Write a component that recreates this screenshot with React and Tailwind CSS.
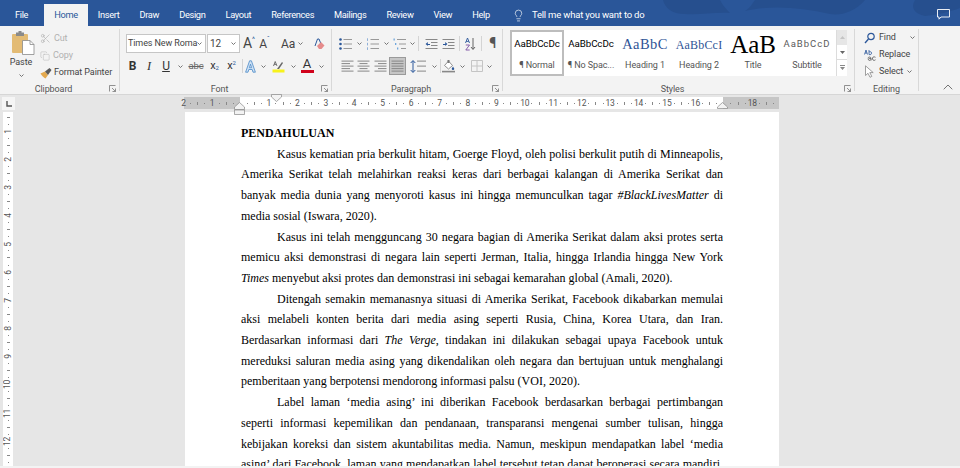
import React from 'react';
import { ChevronUp, Lightbulb, Scissors, Copy } from 'lucide-react';

const tabs = ['File', 'Home', 'Insert', 'Draw', 'Design', 'Layout', 'References', 'Mailings', 'Review', 'View', 'Help'];

const paragraphs = [
    [
        <>Kasus kematian pria berkulit hitam, Goerge Floyd, oleh polisi berkulit putih di Minneapolis,</>,
        <>Amerika Serikat telah melahirkan reaksi keras dari berbagai kalangan di Amerika Serikat dan</>,
        <>banyak media dunia yang menyoroti kasus ini hingga memunculkan tagar <i>#BlackLivesMatter</i> di</>,
        <>media sosial (Iswara, 2020).</>,
    ],
    [
        <>Kasus ini telah mengguncang 30 negara bagian di Amerika Serikat dalam aksi protes serta</>,
        <>memicu aksi demonstrasi di negara lain seperti Jerman, Italia, hingga Irlandia hingga New York</>,
        <><i>Times</i> menyebut aksi protes dan demonstrasi ini sebagai kemarahan global (Amali, 2020).</>,
    ],
    [
        <>Ditengah semakin memanasnya situasi di Amerika Serikat, Facebook dikabarkan memulai</>,
        <>aksi melabeli konten berita dari media asing seperti Rusia, China, Korea Utara, dan Iran.</>,
        <>Berdasarkan informasi dari <i>The Verge</i>, tindakan ini dilakukan sebagai upaya Facebook untuk</>,
        <>mereduksi saluran media asing yang dikendalikan oleh negara dan bertujuan untuk menghalangi</>,
        <>pemberitaan yang berpotensi mendorong informasi palsu (VOI, 2020).</>,
    ],
    [
        <>Label laman ‘media asing’ ini diberikan Facebook berdasarkan berbagai pertimbangan</>,
        <>seperti informasi kepemilikan dan pendanaan, transparansi mengenai sumber tulisan, hingga</>,
        <>kebijakan koreksi dan sistem akuntabilitas media. Namun, meskipun mendapatkan label ‘media</>,
        <>asing’ dari Facebook, laman yang mendapatkan label tersebut tetap dapat beroperasi secara mandiri.</>,
    ],
];

const styleTiles = [
    { sample: 'AaBbCcDc', label: '¶ Normal', cls: 'text-[9.75px] text-black', selected: true },
    { sample: 'AaBbCcDc', label: '¶ No Spac...', cls: 'text-[9.75px] text-black' },
    { sample: 'AaBbC', label: 'Heading 1', cls: "text-[14.5px] text-[#2f5496] font-['Liberation_Serif',serif] tracking-[0.4px]" },
    { sample: 'AaBbCcI', label: 'Heading 2', cls: "text-[12px] text-[#2f5496] font-['Liberation_Serif',serif] tracking-[0.2px]" },
    { sample: 'AaB', label: 'Title', cls: "text-[25px] text-black font-['Liberation_Serif',serif]" },
    { sample: 'AaBbCcD', label: 'Subtitle', cls: 'text-[9.5px] text-[#5a5a5a] tracking-[1px]' },
];

const Chev = ({ className = '' }) => (
    <svg className={`shrink-0 ${className}`} width="5" height="3" viewBox="0 0 5 3">
        <path d="M0.5 0.5 L2.5 2.5 L4.5 0.5" fill="none" stroke="#666" strokeWidth="0.9" />
    </svg>
);

const Launcher = () => (
    <svg className="absolute right-[3px] bottom-[-1px]" width="7" height="7" viewBox="0 0 7 7">
        <path d="M0.5 6.5V0.5H6.5M3 3L6.5 6.5M6.5 3.5V6.5H3.5" fill="none" stroke="#777" strokeWidth="0.8" />
    </svg>
);

const Lines = ({ rows }) => (
    <svg width="13" height="12" viewBox="0 0 13 12">
        {rows.map(([x1, x2], i) => (
            <rect key={i} x={x1} y={1 + i * (10 / (rows.length - 1 || 1)) - 0.4} width={x2 - x1} height="1" fill="#888" />
        ))}
    </svg>
);

const ListIcon = ({ kind }) => (
    <svg width="13" height="12" viewBox="0 0 13 12">
        {[1.5, 6, 10.5].map((y) => (
            <g key={y}>
                {kind === 'bullet' && <circle cx="1.5" cy={y} r="1.3" fill="#2b579a" />}
                {kind === 'number' && <rect x="1" y={y - 1.2} width="1" height="2.6" fill="#8fb0d8" />}
                {kind === 'multi' && <rect x={y === 1.5 ? 0.5 : y === 6 ? 2 : 4} y={y - 1} width="1.3" height="2" fill="#6ea6dc" />}
                <rect x={kind === 'multi' ? (y === 1.5 ? 4 : y === 6 ? 6 : 8) : 4.5} y={y - 0.5} width={kind === 'multi' ? (y === 1.5 ? 9 : y === 6 ? 7 : 5) : 8.5} height="1" fill="#999" />
            </g>
        ))}
    </svg>
);

const IndentIcon = ({ dir }) => (
    <svg width="13" height="12" viewBox="0 0 13 12">
        {[1, 4, 7, 10].map((y) => (
            <rect key={y} x={y === 1 || y === 10 ? 0.5 : 6} y={y} width={y === 1 || y === 10 ? 12 : 6.5} height="1" fill="#888" />
        ))}
        <path d={dir === 'in' ? 'M1 5.9H3.2V4L5.4 6L3.2 8V6.9H1Z' : 'M5 5.9H2.8V4L0.6 6L2.8 8V6.9H5Z'} fill="#2b579a" />
    </svg>
);

const Cell = ({ w, children, className = '' }) => (
    <div className={`flex items-center justify-center shrink-0 ${className}`} style={{ width: w }}>{children}</div>
);

function PasteIcon() {
    return (
        <svg width="24" height="24" viewBox="0 0 24 24">
            <rect x="1" y="3" width="16" height="19" rx="1" fill="#e3bb74" />
            <rect x="5" y="1.5" width="8" height="3.5" fill="#8a8a8a" />
            <rect x="7.5" y="0" width="3" height="2" fill="#8a8a8a" />
            <path d="M11.5 9.5H19L23 13.5V23.5H11.5Z" fill="#fff" stroke="#8a8a8a" strokeWidth="0.8" />
            <path d="M19 9.5V13.5H23" fill="none" stroke="#8a8a8a" strokeWidth="0.8" />
        </svg>
    );
}

function BrushIcon() {
    return (
        <svg width="13" height="12" viewBox="0 0 13 12">
            <path d="M0.5 6.5L5 4.5L8 8L5.5 11.5C4 11 1.5 8.5 0.5 6.5Z" fill="#e3a94f" />
            <path d="M5 4.5L9.5 1L11.5 3L8 8Z" fill="#5a5a5a" />
        </svg>
    );
}

function Clipboard() {
    return (
        <div className="flex h-full whitespace-nowrap">
            <div className="w-[38px] flex flex-col items-center pl-[4px] pt-[2px]">
                <div className="ml-[3px]"><PasteIcon /></div>
                <span className="text-[#444] leading-[15px]">Paste</span>
                <Chev className="mt-[4px]" />
            </div>
            <div className="flex flex-col pt-[1px] pl-[2px]">
                <div className="flex items-center h-[17px] text-[#b1b1b1] gap-[3px]">
                    <Scissors size={11} strokeWidth={1.2} className="text-[#a5a5a5]" />
                    <span>Cut</span>
                </div>
                <div className="flex items-center h-[17px] text-[#b1b1b1] gap-[3px]">
                    <Copy size={10} strokeWidth={1.2} className="text-[#b5b5b5]" />
                    <span>Copy</span>
                </div>
                <div className="flex items-center h-[17px] text-[#444] gap-[1px]">
                    <BrushIcon />
                    <span>Format Painter</span>
                </div>
            </div>
        </div>
    );
}

function FontGroup() {
    return (
        <div className="flex flex-col pl-[6px] pt-[5px]">
            <div className="flex items-center h-[19px]">
                <div className="w-[80px] h-[19px] border border-[#c6c6c6] bg-white flex items-center justify-between pl-[1px] pr-[3px] text-[#444]">
                    <span className="whitespace-nowrap">Times New Roma</span>
                    <Chev />
                </div>
                <div className="ml-[1px] w-[33px] h-[19px] border border-[#c6c6c6] bg-white flex items-center justify-between pl-[2px] pr-[3px] text-[#444]">
                    <span className="text-[10px]">12</span>
                    <Chev />
                </div>
                <Cell w={18} className="text-[#444] text-[14px]">A<sup className="text-[#2b579a] text-[7px]">^</sup></Cell>
                <Cell w={15} className="text-[#444] text-[12px] -ml-[1px]">A<sup className="text-[#2b579a] text-[7px]">ˇ</sup></Cell>
                <Cell w={26} className="text-[#444] text-[12px] gap-[3px] ml-[7px]">Aa<Chev /></Cell>
                <Cell w={14} className="ml-[7px]">
                    <svg width="11" height="12" viewBox="0 0 11 12">
                        <path d="M1 8L3.5 1H5L7 6" fill="none" stroke="#2b579a" strokeWidth="1" />
                        <path d="M3 8L7 4L10.5 7.5L7.5 11H5Z" fill="#e58b8b" />
                    </svg>
                </Cell>
            </div>
            <div className="flex items-center h-[18px] mt-[4px]">
                <Cell w={15} className="ml-[-1px] font-bold text-[12px] text-[#333]">B</Cell>
                <Cell w={18} className="font-['Liberation_Serif',serif] italic text-[12.5px] text-[#333]">I</Cell>
                <Cell w={16} className="underline text-[12px] text-[#333]">U</Cell>
                <Cell w={12}><Chev /></Cell>
                <Cell w={20} className="line-through text-[9.5px] text-[#666]">abc</Cell>
                <Cell w={17} className="text-[11px] text-[#333]">x<sub className="text-[6px] text-[#2b579a]">2</sub></Cell>
                <Cell w={17} className="text-[11px] text-[#333]">x<sup className="text-[6px] text-[#2b579a]">2</sup></Cell>
                <div className="w-px h-[14px] bg-[#d4d4d4] ml-[2px]" />
                <Cell w={14}>
                    <svg width="11" height="13" viewBox="0 0 11 13">
                        <path d="M4.6 0.8H6.4L10.4 12.2H8L7.2 9.5H3.8L3 12.2H0.6ZM5.5 4.2L4.4 7.7H6.6Z" fill="#cfe2f5" stroke="#4a89c8" strokeWidth="0.8" />
                    </svg>
                </Cell>
                <Cell w={12}><Chev /></Cell>
                <Cell w={18}>
                    <svg width="13" height="14" viewBox="0 0 13 14">
                        <path d="M1.5 7L3.2 2.5L5 7M2.2 5.4H4.3" fill="none" stroke="#555" strokeWidth="0.8" />
                        <path d="M5 10L10 3L11 4L7 10Z" fill="#666" />
                        <rect x="0.5" y="10.5" width="12" height="3" fill="#f7f21c" />
                    </svg>
                </Cell>
                <Cell w={12}><Chev /></Cell>
                <Cell w={16}>
                    <div className="flex flex-col items-center leading-[10px] text-[13px] text-[#333]">
                        A
                        <div className="w-[13px] h-[3px] bg-[#d0021b] mt-[1px]" />
                    </div>
                </Cell>
                <Cell w={12}><Chev /></Cell>
            </div>
        </div>
    );
}

function ParagraphGroup() {
    const aligns = [
        [[0.5, 12.5], [0.5, 9], [0.5, 12.5], [0.5, 9], [0.5, 12.5]],
        [[0.5, 12.5], [2.5, 10.5], [0.5, 12.5], [2.5, 10.5], [0.5, 12.5]],
        [[0.5, 12.5], [4, 12.5], [0.5, 12.5], [4, 12.5], [0.5, 12.5]],
    ];
    return (
        <div className="flex flex-col pl-[7px] pt-[5px]">
            <div className="flex items-center h-[19px]">
                <ListIcon kind="bullet" />
                <Cell w={14}><Chev /></Cell>
                <ListIcon kind="number" />
                <Cell w={14}><Chev /></Cell>
                <ListIcon kind="multi" />
                <Cell w={12}><Chev /></Cell>
                <div className="w-px h-[15px] bg-[#d4d4d4] mr-[6px]" />
                <IndentIcon dir="out" />
                <div className="w-[4px]" />
                <IndentIcon dir="in" />
                <div className="w-px h-[15px] bg-[#d4d4d4] mx-[4px]" />
                <Cell w={12}>
                    <svg width="11" height="14" viewBox="0 0 11 14">
                        <path d="M0.5 6L2.5 1L4.5 6M1.2 4.4H3.8" fill="none" stroke="#2b579a" strokeWidth="0.9" />
                        <path d="M0.8 8H4.5L0.8 13H4.7" fill="none" stroke="#7a4fa3" strokeWidth="0.9" />
                        <path d="M8 1V12M6 10L8 12.5L10 10" fill="none" stroke="#555" strokeWidth="0.9" />
                    </svg>
                </Cell>
                <div className="w-px h-[15px] bg-[#d4d4d4] mx-[5px]" />
                <Cell w={11} className="text-[#555] text-[14px] font-bold">¶</Cell>
            </div>
            <div className="flex items-center h-[18px] mt-[4px]">
                {aligns.map((rows, i) => (
                    <Cell key={i} w={i === 2 ? 19 : 16}><Lines rows={rows} /></Cell>
                ))}
                <Cell w={17} className="h-[18px] bg-[#c6c6c6] border border-[#9a9a9a] ml-[-1px]">
                    <Lines rows={[[0.5, 12.5], [0.5, 12.5], [0.5, 12.5], [0.5, 12.5], [0.5, 12.5]]} />
                </Cell>
                <Cell w={20} className="ml-[4px] gap-[1px]">
                    <svg width="6" height="13" viewBox="0 0 6 13">
                        <path d="M3 1V12M0.7 3L3 0.5L5.3 3M0.7 10L3 12.5L5.3 10" fill="none" stroke="#2b579a" strokeWidth="1" />
                    </svg>
                    <Lines rows={[[0, 9], [0, 9], [0, 9]]} />
                </Cell>
                <Cell w={9}><Chev /></Cell>
                <div className="w-px h-[14px] bg-[#d4d4d4] ml-[1px]" />
                <Cell w={13} className="ml-[1px]">
                    <svg width="13" height="14" viewBox="0 0 13 14">
                        <path d="M2.5 6.5L6.5 2L10.5 6.5L6.5 10Z" fill="#fff" stroke="#777" strokeWidth="0.8" />
                        <path d="M5.5 1H7.5V4H5.5Z" fill="#777" />
                        <path d="M11 7.5L12.3 9.8A1.3 1.3 0 0 1 9.7 9.8Z" fill="#2b579a" />
                        <rect x="0" y="11.8" width="13" height="1.6" fill="#888" />
                    </svg>
                </Cell>
                <Cell w={15}><Chev /></Cell>
                <Cell w={14}>
                    <svg width="12" height="12" viewBox="0 0 12 12">
                        <path d="M0.5 0.5H11.5V11.5H0.5ZM6 0.5V11.5M0.5 6H11.5" fill="none" stroke="#c4c4c4" strokeWidth="1" />
                    </svg>
                </Cell>
                <Cell w={11}><Chev /></Cell>
            </div>
        </div>
    );
}

function StylesGroup() {
    return (
        <div className="flex pl-[7px] pt-[1px]">
            <div className="flex w-[326px] h-[46px] bg-white">
                {styleTiles.map((t) => (
                    <div
                        key={t.label}
                        className={`w-[54px] shrink-0 h-[46px] flex flex-col items-center ${t.selected ? 'border-2 border-[#bdbdbd]' : 'border-2 border-white'}`}
                    >
                        <div className={`h-[25px] w-full flex items-center justify-center whitespace-nowrap ${t.cls}`}>{t.sample}</div>
                        <div className="text-[#555] text-[9px] leading-[15px] mt-[1px] whitespace-nowrap">{t.label}</div>
                    </div>
                ))}
            </div>
            <div className="flex flex-col w-[11px] h-[46px] bg-white border-l border-[#dcdcdc]">
                <div className="h-[15px] bg-[#e6e6e6] flex items-center justify-center">
                    <svg width="5" height="3" viewBox="0 0 5 3"><path d="M0 3L2.5 0L5 3Z" fill="#c4c4c4" /></svg>
                </div>
                <div className="h-[15px] flex items-center justify-center border-b border-[#dcdcdc]">
                    <svg width="5" height="3" viewBox="0 0 5 3"><path d="M0 0L2.5 3L5 0Z" fill="#666" /></svg>
                </div>
                <div className="h-[15px] flex items-center justify-center">
                    <svg width="5" height="5" viewBox="0 0 5 5"><path d="M0 0H5V1H0ZM0 2L2.5 5L5 2Z" fill="#888" /></svg>
                </div>
            </div>
        </div>
    );
}

function EditingGroup() {
    return (
        <div className="flex flex-col pl-[9px] text-[#444]">
            <div className="flex items-center h-[17px] gap-[4px]">
                <svg width="11" height="12" viewBox="0 0 11 12">
                    <circle cx="7" cy="4.5" r="3.2" fill="none" stroke="#2b579a" strokeWidth="1.2" />
                    <path d="M4.5 7L1 11" stroke="#2b579a" strokeWidth="1.4" />
                </svg>
                <span>Find</span>
                <Chev className="ml-[10px]" />
            </div>
            <div className="flex items-center h-[17px] gap-[3px]">
                <svg width="12" height="12" viewBox="0 0 12 12">
                    <path d="M0.5 5.5L2 1L3.5 5.5M1 4H3" fill="none" stroke="#2b579a" strokeWidth="0.8" />
                    <path d="M5 1V5.5C6.5 6 7.5 5.5 7.5 4S6 2.5 5 3" fill="none" stroke="#2b579a" strokeWidth="0.8" />
                    <path d="M4 9.5C4 7.5 7 7.5 7 9.5V11.5M7 9.5C5 9 4 10 4.5 11C5 11.7 6.5 11.5 7 10.5M11.5 8.3C9.5 7 8 8.5 8.5 10C9 11.7 10.5 11.7 11.5 10.8" fill="none" stroke="#555" strokeWidth="0.8" />
                </svg>
                <span>Replace</span>
            </div>
            <div className="flex items-center h-[17px] gap-[4px]">
                <svg width="11" height="13" viewBox="0 0 11 13">
                    <path d="M1.5 0.8V10.5L4 8.3L6 12.3L7.8 11.4L5.8 7.6H9.2Z" fill="#fff" stroke="#888" strokeWidth="0.8" />
                </svg>
                <span>Select</span>
                <Chev />
            </div>
        </div>
    );
}

const Group = ({ w, label, children, launcher = true }) => (
    <div className="relative h-full shrink-0 border-r border-[#d8d8d8] flex flex-col" style={{ width: w }}>
        <div className="flex-1 min-h-0">{children}</div>
        <div className={`h-[12px] mb-[-4px] text-center text-[#555] leading-[12px] ${launcher ? 'pr-[12px]' : ''}`}>{label}</div>
        {launcher && <Launcher />}
    </div>
);

function HRuler() {
    const cells = [];
    for (let n = -2; n <= 18; n++) {
        // 0 and 17 sit under the indent markers
        cells.push(n === 0 || n === 17 ? '' : Math.abs(n));
        cells.push('.', '|', '.');
    }
    return (
        <div className="relative h-[12px] w-[595px] bg-white flex">
            <div className="absolute left-0 top-0 h-[12px] w-[56px] bg-[#c6c6c6]" />
            <div className="absolute right-0 top-0 h-[12px] w-[56px] bg-[#c6c6c6]" />
            <div className="flex -ml-[4px]">
                {cells.map((c, i) => (
                    <div key={i} className="relative w-[7.118px] shrink-0 h-[12px] flex items-center justify-center text-[8.5px] text-[#555] whitespace-nowrap">
                        {c === '.' ? <span className="w-px h-px bg-[#888]" /> : c === '|' ? <span className="w-px h-[3px] bg-[#888]" /> : c}
                    </div>
                ))}
            </div>
            <svg className="absolute left-[50px] top-[5px]" width="11" height="13" viewBox="0 0 11 13">
                <path d="M0.5 5L5.5 0.5L10.5 5V7.5H0.5ZM0.5 8H10.5V12.5H0.5Z" fill="#f3f3f3" stroke="#888" strokeWidth="0.7" />
            </svg>
            <svg className="absolute left-[87px] top-[-3px]" width="11" height="8" viewBox="0 0 11 8">
                <path d="M0.5 0.5H10.5V3L5.5 7.5L0.5 3Z" fill="#f3f3f3" stroke="#888" strokeWidth="0.7" />
            </svg>
            <svg className="absolute left-[533px] top-[5px]" width="11" height="7" viewBox="0 0 11 7">
                <path d="M0.5 5L5.5 0.5L10.5 5V6.5H0.5Z" fill="#f3f3f3" stroke="#888" strokeWidth="0.7" />
            </svg>
        </div>
    );
}

function VRuler() {
    const cells = ['|', '.'];
    for (let n = 1; n <= 12; n++) cells.push(n, '.', '|', '.');
    return (
        <div className="w-[10px] ml-[3px] flex-1 min-h-0 bg-white overflow-hidden pt-[1.5px]">
            {cells.map((c, i) => (
                <div key={i} className="h-[7.05px] w-[10px] flex items-center justify-center text-[8.5px] text-[#555]">
                    {c === '.' ? <span className="w-px h-px bg-[#888]" /> : c === '|' ? <span className="w-[3px] h-px bg-[#888]" /> : <span className="-rotate-90 whitespace-nowrap">{c}</span>}
                </div>
            ))}
        </div>
    );
}

export default function App() {
    return (
        <div className="w-[960px] h-[468px] overflow-hidden flex flex-col bg-[#e6e6e6] font-['Roboto','Noto_Sans',sans-serif] text-[9px] tracking-[-0.1px]">
            {/* title / tab bar */}
            <div className="relative h-[26px] shrink-0 bg-[#2a5699] flex items-end pl-[5px] text-white text-[9.25px] tracking-[-0.33px] overflow-hidden">
                <svg className="absolute left-[660px] top-0" width="300" height="26" viewBox="0 0 300 26">
                    <path d="M3 0C5 8 12 14 25 14C40 15 55 12 70 13C65 8 62 4 60 0Z" fill="#264f8e" />
                    <path d="M85 11C110 5 140 7 170 14C180 16 195 12 205 0H95C92 4 90 8 85 11Z" fill="#264f8e" />
                    <path d="M255 0C250 8 255 14 265 16C275 15 290 12 300 8V0Z" fill="#264f8e" />
                </svg>
                {tabs.map((t) => (
                    <div
                        key={t}
                        className={`relative h-[22px] px-[10px] flex items-center ${t === 'Home' ? 'bg-[#f3f3f3] text-[#2b579a]' : ''} ${t === 'File' ? 'mr-[6px]' : ''}`}
                    >
                        {t}
                    </div>
                ))}
                <div className="relative h-[22px] flex items-center ml-[12px] gap-[7px] text-[9.5px] tracking-[-0.2px]">
                    <Lightbulb size={13} strokeWidth={1.2} />
                    <span>Tell me what you want to do</span>
                </div>
                <svg className="absolute right-[10px] top-[9px]" width="13" height="11" viewBox="0 0 13 11">
                    <path d="M0.5 0.5H12.5V8H4L2 10.2V8H0.5Z" fill="none" stroke="#fff" strokeWidth="0.9" />
                </svg>
            </div>

            {/* ribbon */}
            <div className="relative h-[69px] shrink-0 bg-[#f3f3f3] border-b border-[#d6d6d6] flex pt-[3px] pb-[3px]">
                <Group w={120} label="Clipboard"><Clipboard /></Group>
                <Group w={212} label="Font"><FontGroup /></Group>
                <Group w={171} label="Paragraph"><ParagraphGroup /></Group>
                <Group w={352} label="Styles"><StylesGroup /></Group>
                <Group w={64} label="Editing" launcher={false}><EditingGroup /></Group>
                <ChevronUp size={16} strokeWidth={1} className="absolute right-[4px] bottom-[-1px] text-[#333]" />
            </div>

            {/* document area */}
            <div className="flex flex-1 min-h-0">
                <div className="w-[185px] shrink-0 flex flex-col pt-[2px]">
                    <div className="ml-[2px] w-[13px] h-[13px] bg-[#f5f5f5] flex items-center justify-center">
                        <svg width="6" height="6" viewBox="0 0 6 6"><path d="M1 0V5H6" fill="none" stroke="#555" strokeWidth="1.4" /></svg>
                    </div>
                    <div className="h-[2px]" />
                    <VRuler />
                </div>
                <div className="w-[594px] shrink-0 flex flex-col">
                    <div className="h-[17px] pt-[2px] shrink-0 -ml-px"><HRuler /></div>
                    <div className="flex-1 min-h-0 bg-white overflow-hidden px-[56px] font-['Liberation_Serif',serif] text-[12px] tracking-normal leading-[20.7px] text-black">
                        <div className="font-bold mt-[11px]">PENDAHULUAN</div>
                        {paragraphs.map((lines, p) => (
                            <div key={p}>
                                {lines.map((line, i) => (
                                    <div
                                        key={i}
                                        className={`${i === 0 ? 'pl-[36px]' : ''} ${i === lines.length - 1 && p !== 3 ? 'whitespace-nowrap' : 'text-justify [text-align-last:justify]'}`}
                                    >
                                        {line}
                                    </div>
                                ))}
                            </div>
                        ))}
                    </div>
                </div>
                <div className="flex-1" />
            </div>
            <div className="h-[2px] shrink-0 bg-[#f3f3f3]" />
        </div>
    );
}
